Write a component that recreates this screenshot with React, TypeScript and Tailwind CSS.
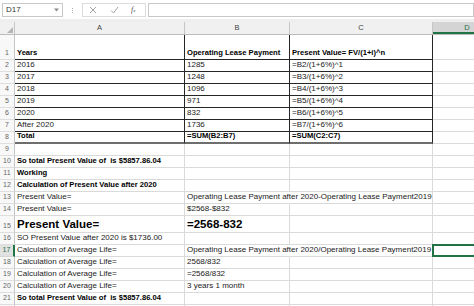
import React from 'react';

type Cell = { t?: string; b?: boolean; big?: boolean };
type RowDef = {
  n: number;
  label?: boolean;
  h?: 'tall' | 'big';
  A?: Cell;
  B?: Cell;
  C?: Cell;
  table?: boolean;
  thick?: boolean;
  over?: boolean;
  sel?: boolean;
};

const rows: RowDef[] = [
  { n: 1, h: 'tall', table: true, A: { t: 'Years', b: true }, B: { t: 'Operating Lease Payment', b: true }, C: { t: 'Present Value= FV/(1+i)^n', b: true } },
  { n: 2, table: true, A: { t: '2016' }, B: { t: '1285' }, C: { t: '=B2/(1+6%)^1' } },
  { n: 3, table: true, A: { t: '2017' }, B: { t: '1248' }, C: { t: '=B3/(1+6%)^2' } },
  { n: 4, table: true, A: { t: '2018' }, B: { t: '1096' }, C: { t: '=B4/(1+6%)^3' } },
  { n: 5, table: true, A: { t: '2019' }, B: { t: '971' }, C: { t: '=B5/(1+6%)^4' } },
  { n: 6, table: true, A: { t: '2020' }, B: { t: '832' }, C: { t: '=B6/(1+6%)^5' } },
  { n: 7, table: true, A: { t: 'After 2020' }, B: { t: '1736' }, C: { t: '=B7/(1+6%)^6' } },
  { n: 8, table: true, thick: true, A: { t: 'Total', b: true }, B: { t: '=SUM(B2:B7)', b: true }, C: { t: '=SUM(C2:C7)', b: true } },
  { n: 9 },
  { n: 10, A: { t: 'So total Present Value of  is $5857.86.04', b: true } },
  { n: 11, A: { t: 'Working', b: true } },
  { n: 12, A: { t: 'Calculation of Present Value after 2020', b: true } },
  { n: 13, over: true, A: { t: 'Present Value=' }, B: { t: 'Operating Lease Payment after 2020-Operating Lease Payment2019' } },
  { n: 14, A: { t: 'Present Value=' }, B: { t: '$2568-$832' } },
  { n: 15, h: 'big', A: { t: 'Present Value=', big: true }, B: { t: '=2568-832', big: true } },
  { n: 16, A: { t: 'SO Present Value after 2020 is $1736.00' } },
  { n: 17, over: true, sel: true, A: { t: 'Calculation of Average Life=' }, B: { t: 'Operating Lease Payment after 2020/Operating Lease Payment2019' } },
  { n: 18, A: { t: 'Calculation of Average Life=' }, B: { t: '2568/832' } },
  { n: 19, A: { t: 'Calculation of Average Life=' }, B: { t: '=2568/832' } },
  { n: 20, A: { t: 'Calculation of Average Life=' }, B: { t: '3 years 1 month' } },
  { n: 21, A: { t: 'So total Present Value of  is $5857.86.04', b: true } },
  { n: 22, label: false },
];

function Txt({ c }: { c?: Cell }) {
  if (!c || !c.t) return null;
  const cls = c.big
    ? 'text-[11.5px] leading-[14px] font-bold text-black'
    : c.b
    ? 'text-[7.6px] leading-[10px] font-bold text-black'
    : 'text-[8px] leading-[10px] text-[#1a1a1a]';
  return <span className={`whitespace-pre ${cls}`}>{c.t}</span>;
}

function Row({ r }: { r: RowDef }) {
  const hCls = r.h === 'tall' ? 'h-[25px]' : r.h === 'big' ? 'h-[17px]' : 'h-[12px]';
  const tb = r.table;
  const bottom = r.thick
    ? 'border-b-2 border-b-[#6e6e6e]'
    : tb
    ? 'border-b border-b-[#262626]'
    : 'border-b border-b-[#dadada]';
  const rightT = tb ? 'border-r border-r-[#262626]' : 'border-r border-r-[#dadada]';
  const rightB = r.over ? 'border-r border-r-transparent' : rightT;
  return (
    <div className={`flex ${hCls}`}>
      <div
        className={
          r.sel
            ? 'w-[15px] shrink-0 flex items-end justify-center pb-[1px] bg-[#e1e1e1] border-b border-b-[#d4d4d4] border-r-2 border-r-[#217346] text-[7px] leading-[10px] text-[#217346]'
            : 'w-[15px] shrink-0 flex items-end justify-center pb-[1px] bg-[#f8f8f8] border-b border-b-[#dedede] border-r border-r-[#c6c6c6] text-[7px] leading-[10px] text-[#666]'
        }
      >
        {r.label === false ? '' : r.n}
      </div>
      <div className={`w-[170px] shrink-0 flex items-end pl-[2px] pb-[1px] ${rightT} ${bottom}`}>
        <Txt c={r.A} />
      </div>
      <div className={`w-[105px] shrink-0 flex items-end pl-[2px] pb-[1px] ${rightB} ${bottom}`}>
        <Txt c={r.B} />
      </div>
      <div
        className={`w-[143px] shrink-0 flex items-end pl-[2px] pb-[1px] ${r.sel ? 'relative z-0' : ''} ${rightT} ${bottom}`}
      >
        <Txt c={r.C} />
      </div>
      <div
        className={
          r.sel
            ? 'relative z-10 w-[80px] shrink-0 bg-white border-2 border-[#217346] -mt-px -ml-px'
            : 'w-[80px] shrink-0 border-b border-b-[#dadada] border-r border-r-[#dadada]'
        }
      />
    </div>
  );
}

export default function App() {
  return (
    <div className="w-[474px] h-[306px] overflow-hidden bg-white font-['Liberation_Sans',Arial,sans-serif]">
      {/* formula bar */}
      <div className="h-[19px] flex items-start pt-[3px] pl-[2px] bg-white">
        <div className="w-[61px] h-[14px] shrink-0 border border-[#c8c8c8] flex items-center justify-between px-[3px]">
          <span className="text-[8px] leading-none text-[#333]">D17</span>
          <svg width="5" height="4" viewBox="0 0 5 4">
            <path d="M0 0.5 L5 0.5 L2.5 3.5 Z" fill="#8a8a8a" />
          </svg>
        </div>
        <div className="w-[19px] shrink-0 h-[14px] flex flex-col items-center justify-center gap-[1px]">
          <span className="block w-[1px] h-[1px] bg-[#b0b0b0]" />
          <span className="block w-[1px] h-[1px] bg-[#b0b0b0]" />
          <span className="block w-[1px] h-[1px] bg-[#b0b0b0]" />
        </div>
        <div className="w-[64px] h-[14px] shrink-0 border border-[#dcdcdc] flex items-center">
          <svg width="8" height="8" viewBox="0 0 8 8" className="ml-[6px]">
            <path d="M1 1 L7 7 M7 1 L1 7" stroke="#9a9a9a" strokeWidth="0.9" fill="none" />
          </svg>
          <svg width="9" height="8" viewBox="0 0 9 8" className="ml-[13px]">
            <path d="M1 4.5 L3.5 7 L8 1" stroke="#9a9a9a" strokeWidth="0.9" fill="none" />
          </svg>
          <span className="ml-[12px] font-['Liberation_Serif',serif] italic text-[8px] leading-none text-[#555]">
            f<span className="text-[5px]">x</span>
          </span>
        </div>
        <div className="ml-[2px] flex-1 h-[14px] border border-[#c8c8c8] bg-white" />
      </div>
      <div className="h-[3px] bg-[#eeeeee]" />
      {/* column headers */}
      <div className="flex h-[13px] bg-[#f0f0f0] border-b border-b-[#bcbcbc] text-[7.5px] leading-[12px] text-[#444]">
        <div className="w-[15px] shrink-0 relative border-r border-r-[#c6c6c6]">
          <svg width="6" height="6" viewBox="0 0 6 6" className="absolute right-[1px] bottom-[1px]">
            <path d="M6 0 L6 6 L0 6 Z" fill="#b5b5b5" />
          </svg>
        </div>
        <div className="w-[170px] shrink-0 text-center border-r border-r-[#c6c6c6]">A</div>
        <div className="w-[105px] shrink-0 text-center border-r border-r-[#c6c6c6]">B</div>
        <div className="w-[143px] shrink-0 text-center border-r border-r-[#c6c6c6]">C</div>
        <div className="w-[68px] shrink-0 text-center bg-[#d4d4d4] border-b-2 border-b-[#217346] text-[#217346]">D</div>
      </div>
      {rows.map((r) => (
        <Row key={r.n} r={r} />
      ))}
    </div>
  );
}
